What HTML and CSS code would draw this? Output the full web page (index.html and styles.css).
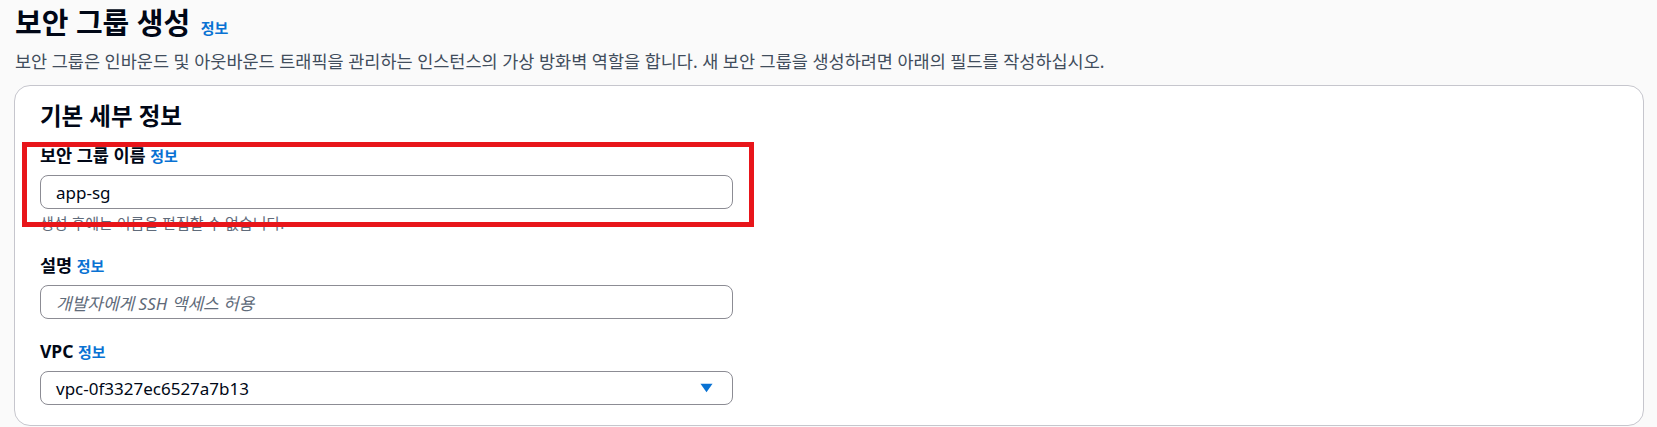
FILE: index.html
```html
<!DOCTYPE html>
<html lang="ko">
<head>
<meta charset="utf-8">
<title>보안 그룹 생성</title>
<link rel="stylesheet" href="styles.css">
</head>
<body>
<main class="page">
  <header class="head">
    <h1 class="title">보안 그룹 생성 <a class="info info-lg" href="#">정보</a></h1>
    <p class="desc">보안 그룹은 인바운드 및 아웃바운드 트래픽을 관리하는 인스턴스의 가상 방화벽 역할을 합니다. 새 보안 그룹을 생성하려면 아래의 필드를 작성하십시오.</p>
  </header>
  <section class="card">
    <h2 class="card-title">기본 세부 정보</h2>
    <div class="field field-marked">
      <label class="label">보안 그룹 이름 <a class="info" href="#">정보</a></label>
      <div class="input">app-sg</div>
      <p class="help">생성 후에는 이름을 편집할 수 없습니다.</p>
      <div class="mark"></div>
    </div>
    <div class="field">
      <label class="label">설명 <a class="info" href="#">정보</a></label>
      <div class="input placeholder">개발자에게 SSH 액세스 허용</div>
    </div>
    <div class="field">
      <label class="label">VPC <a class="info" href="#">정보</a></label>
      <div class="input select">
        <span>vpc-0f3327ec6527a7b13</span>
        <svg class="caret" width="14" height="10" viewBox="0 0 14 10"><path d="M0.5 0.5 H13.5 L7 9.5 Z" fill="#0972d3"/></svg>
      </div>
    </div>
  </section>
</main>
</body>
</html>
```
FILE: styles.css
```css
* { box-sizing: border-box; }
html, body { margin: 0; padding: 0; }
body {
  background: #fafafa;
  font-family: "Noto Sans", "Noto Sans CJK KR", sans-serif;
  color: #000716;
}
.page {
  padding: 5px 13px 0 14px;
}
.head {
  padding-left: 1px;
}
.title {
  margin: 0;
  font-size: 29px;
  line-height: 36px;
  font-weight: 700;
}
.info {
  color: #0972d3;
  text-decoration: none;
  font-weight: 700;
  font-size: 15px;
}
.info-lg { margin-left: 3px; }
.desc {
  margin: 4px 0 0;
  font-size: 17.5px;
  line-height: 23px;
  color: #414d5c;
}
.card {
  margin-top: 12px;
  background: #fff;
  border: 1px solid #c6c6cd;
  border-radius: 16px;
  padding: 15px 25px 20px;
}
.card-title {
  margin: 0;
  font-size: 23.5px;
  line-height: 30px;
  font-weight: 700;
}
.field {
  position: relative;
  width: 693px;
  margin-top: 20px;
}
.field-marked { margin-top: 12px; }
.label {
  display: block;
  font-size: 17.5px;
  line-height: 25px;
  font-weight: 700;
  margin-bottom: 6px;
}
.input {
  height: 34px;
  border: 1px solid #8c8c94;
  border-radius: 8px;
  padding: 0 15px;
  display: flex;
  align-items: center;
  font-size: 17px;
  color: #000716;
  background: #fff;
}
.placeholder {
  color: #5f6b7a;
  font-style: italic;
}
.select { justify-content: space-between; padding-right: 19px; }
.caret { display: block; width: 13px; height: 10px; }
.help {
  margin: 4px 0 0;
  font-size: 15px;
  line-height: 20px;
  color: #5f6b7a;
}
.mark {
  position: absolute;
  left: -18px;
  right: -21px;
  top: -1px;
  bottom: 6px;
  border: 5px solid #e8151a;
  pointer-events: none;
}
```
